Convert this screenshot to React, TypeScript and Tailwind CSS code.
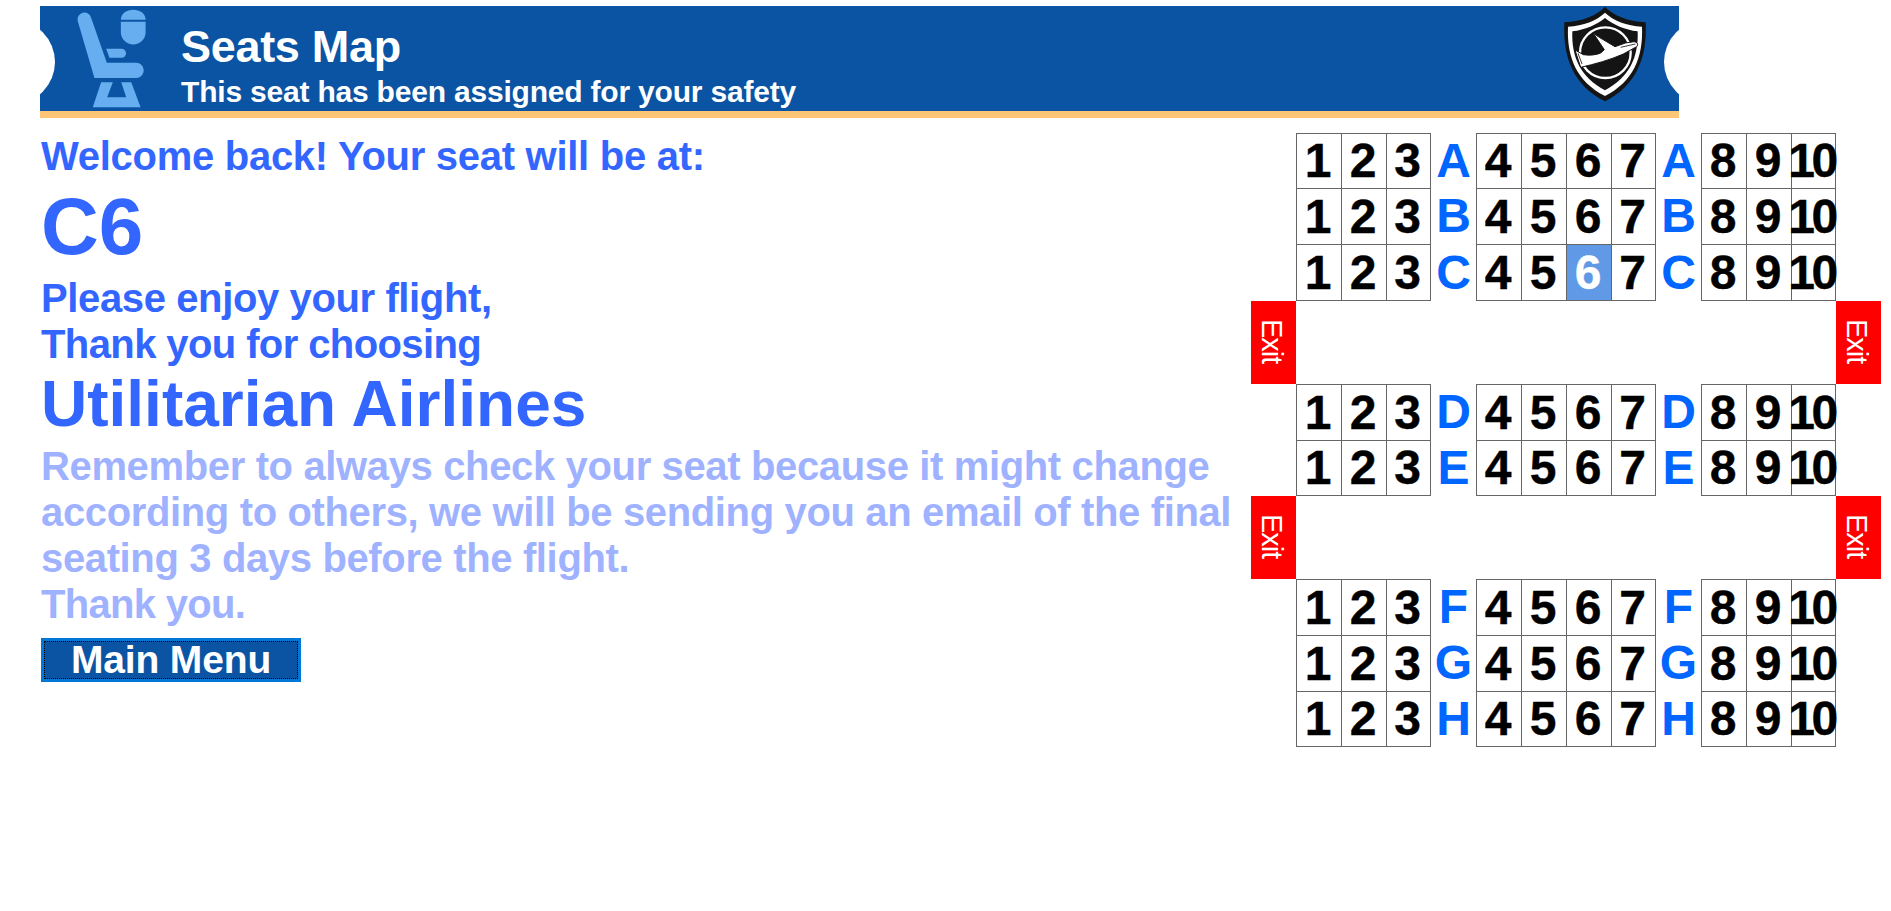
const groups: { letter: string; height: string; active?: number }[][] = [
  [
    { letter: "A", height: "h-[55px]" },
    { letter: "B", height: "h-[56px]" },
    { letter: "C", height: "h-[57px]", active: 6 },
  ],
  [
    { letter: "D", height: "h-[56px]" },
    { letter: "E", height: "h-[56px]" },
  ],
  [
    { letter: "F", height: "h-[56px]" },
    { letter: "G", height: "h-[56px]" },
    { letter: "H", height: "h-[56px]" },
  ],
];

function SeatBlock({ seats, active, last }: { seats: number[]; active?: number; last: boolean }) {
  return (
    <div className="flex">
      {seats.map((n) => (
        <div
          key={n}
          className={`flex w-[45px] items-center justify-center border-r border-t border-[#666666] text-[48px] font-bold leading-none [-webkit-text-stroke:0.4px_currentColor] first:w-[46px] first:border-l last:w-[44px] ${
            last ? "border-b" : ""
          } ${n === active ? "bg-[#6099e6] text-white" : "text-black"}`}
        >
          {n === 10 ? (
            <span className="-ml-[4px] shrink-0 tracking-[-3.5px]">10</span>
          ) : (
            <span className="-ml-[2px]">{n}</span>
          )}
        </div>
      ))}
    </div>
  );
}

function RowLetter({ letter }: { letter: string }) {
  return (
    <div className="flex w-[45px] items-center justify-center text-[48px] font-bold leading-none text-[#0066ff]">
      {letter}
    </div>
  );
}

function ExitCell() {
  return (
    <div className="flex h-[83px] w-[45px] items-center justify-center bg-[#ff0000] pb-[3px] pr-[4px] text-[29px] text-white">
      <span className="leading-[38px] tracking-[-1px] [writing-mode:vertical-rl]">Exit</span>
    </div>
  );
}

function SeatMap() {
  return (
    <div className="w-[630px]">
      {groups.map((group, i) => (
        <div key={group[0].letter}>
          {group.map(({ letter, height, active }, r) => {
            const last = r === group.length - 1;
            return (
              <div key={letter} className={`flex pl-[45px] ${height}`}>
                <SeatBlock seats={[1, 2, 3]} last={last} />
                <RowLetter letter={letter} />
                <SeatBlock seats={[4, 5, 6, 7]} active={active} last={last} />
                <RowLetter letter={letter} />
                <SeatBlock seats={[8, 9, 10]} last={last} />
              </div>
            );
          })}
          {i < groups.length - 1 && (
            <div className="flex justify-between">
              <ExitCell />
              <ExitCell />
            </div>
          )}
        </div>
      ))}
    </div>
  );
}

function SeatIcon() {
  return (
    <svg viewBox="140 20 215 305" className="ml-[36px] mt-[1px] h-[102px] w-[72px] shrink-0" fill="#66aeef">
      <path d="M274 58 C274 38 292 28 311 28 C330 28 348 38 348 58 Z" />
      <path d="M274 64 H348 V96 C348 116 330 132 311 132 C292 132 274 116 274 96 Z" />
      <path d="M145 62 A20 20 0 0 1 185 52 L232 187 H320 A22.5 22.5 0 0 1 320 232 H195 Z" />
      <path d="M230 145 H276 A13.5 13.5 0 0 1 276 172 H240 Z" />
      <path d="M215 245 H250 L233 290 H290 L275 245 H305 L333 320 H190 Z" />
    </svg>
  );
}

function ShieldLogo() {
  return (
    <svg viewBox="0 6 300 306" className="h-[102px] w-[100px] shrink-0">
      <path d="M135 8 C160 35 205 52 257 55 C262 160 230 245 135 292 C40 245 8 160 13 55 C65 52 110 35 135 8 Z" fill="#141414" />
      <path d="M135 26 C160 50 200 65 246 68 C250 160 220 232 135 276 C50 232 20 160 24 68 C70 65 110 50 135 26 Z" fill="#ffffff" />
      <path d="M135 42 C160 62 195 78 233 82 C236 160 208 220 135 259 C62 220 34 160 37 82 C75 78 110 62 135 42 Z" fill="#141414" />
      <circle cx="136" cy="146" r="76" fill="none" stroke="#ffffff" strokeWidth="7" />
      <path
        d="M45 138 L70 152 C90 155 108 153 122 147 L133 137 L100 88 L118 100 L165 128 L196 117 L222 113 C232 114 236 122 230 128 L190 150 C150 168 105 180 62 190 Z"
        fill="#ffffff"
        stroke="#141414"
        strokeWidth="3"
      />
      <path d="M54 148 L66 180 M182 130 L226 120" fill="none" stroke="#141414" strokeWidth="2.5" />
    </svg>
  );
}

export default function App() {
  return (
    <div className="min-h-[911px] bg-white font-['Liberation_Sans',Arial,sans-serif]">
      <div className="pl-[40px] pt-[6px]">
        <header className="relative flex h-[112px] w-[1639px] overflow-hidden border-b-[7px] border-[#ffc576] bg-[#0b54a4]">
          <div className="absolute -left-[69px] top-[14px] size-[84px] rounded-full bg-white"></div>
          <div className="absolute -right-[69px] top-[14px] size-[84px] rounded-full bg-white"></div>
          <SeatIcon />
          <div className="ml-[33px] mt-[16px] flex-1 text-white">
            <h1 className="text-[45px] font-bold leading-[50px] tracking-[-0.3px]">Seats Map</h1>
            <p className="mt-[3px] text-[30px] font-bold leading-[34px] tracking-[-0.2px]">
              This seat has been assigned for your safety
            </p>
          </div>
          <div className="mr-[19px]">
            <ShieldLogo />
          </div>
        </header>
      </div>
      <main className="flex justify-between pl-[41px] pr-[10px] pt-[15px]">
        <div className="w-[1210px] text-[40px] font-bold leading-[46px] text-[#3366ff]">
          <p className="tracking-[-0.28px]">Welcome back! Your seat will be at:</p>
          <p className="text-[80px] leading-[96px]">C6</p>
          <p className="tracking-[-0.38px]">Please enjoy your flight,</p>
          <p className="tracking-[-0.6px]">Thank you for choosing</p>
          <p className="mb-[2px] text-[64px] leading-[74px]">Utilitarian Airlines</p>
          <p className="tracking-[-0.36px] text-[#9fb2ff]">
            Remember to always check your seat because it might change according to others, we will be sending you an email of the final seating 3 days before the flight.
            <br />
            <span className="tracking-[-0.7px]">Thank you.</span>
          </p>
          <button className="mt-[11px] block h-[44px] w-[260px] border-[3px] border-[#0078d7] bg-[#0b54a4] text-center text-[39px] font-bold leading-[36px] tracking-[-0.15px] text-white outline-1 -outline-offset-[4px] outline-dotted outline-black">
            Main Menu
          </button>
        </div>
        <SeatMap />
      </main>
    </div>
  );
}
